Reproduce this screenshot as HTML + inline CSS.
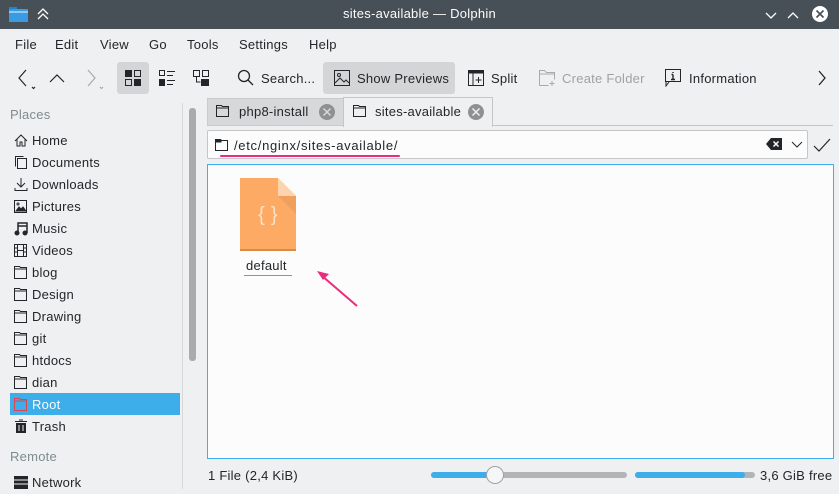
<!DOCTYPE html><html><head><meta charset="utf-8"><style>
*{box-sizing:border-box;margin:0;padding:0}
body{width:839px;height:494px;background:#eff0f1;font-family:"Liberation Sans","DejaVu Sans",sans-serif;font-size:13px;color:#232629;position:relative;overflow:hidden;letter-spacing:0.25px}
.a{position:absolute;white-space:nowrap}
.tb{left:0;top:0;width:839px;height:29px;background:#475057}
.side div.it{position:absolute;left:32px;font-size:13px}
</style></head><body>
<div class="a tb"></div>
<svg class="a" style="left:9px;top:6px" width="19" height="16"><rect x="0" y="1" width="8" height="4" fill="#1d84d1"/><rect x="0" y="3" width="19" height="13" fill="#3a9be3"/><rect x="0" y="5" width="19" height="2" fill="#8fcaf5"/></svg>
<svg class="a" style="left:36px;top:7px" width="14" height="14" stroke="#fff" fill="none" stroke-width="1.3"><path d="M2 7l5-5 5 5M2 12l5-5 5 5"/></svg>
<div class="a" style="left:0;width:839px;top:6px;text-align:center;color:#fcfcfc;font-size:13px">sites-available — Dolphin</div>
<svg class="a" style="left:762px;top:6px" width="75" height="18" stroke="#fff" fill="none" stroke-width="1.3"><path d="M4 7l5 5 5-5M26 12l5-5 5 5"/><circle cx="58" cy="8" r="8" fill="#fff" stroke="none"/><path d="M54.5 4.5l7 7M61.5 4.5l-7 7" stroke="#475057" stroke-width="1.6"/></svg>
<div class="a" style="top:37px;left:15px">File</div>
<div class="a" style="top:37px;left:55px">Edit</div>
<div class="a" style="top:37px;left:100px">View</div>
<div class="a" style="top:37px;left:149px">Go</div>
<div class="a" style="top:37px;left:187px">Tools</div>
<div class="a" style="top:37px;left:239px">Settings</div>
<div class="a" style="top:37px;left:309px">Help</div>
<svg class="a" style="left:14px;top:66px" width="100" height="26" stroke="#232629" fill="none" stroke-width="1.2"><path d="M12 4l-7 8 7 8M18 21l1.5 1.5 1.5-1.5M36 16l7-7 7 7" /><path d="M74 4l7 8-7 8M86 21l1.5 1.5 1.5-1.5" stroke="#aaa"/></svg>
<div class="a" style="left:117px;top:62px;width:32px;height:32px;background:#d4d5d7;border-radius:3px"></div>
<svg class="a" style="left:125px;top:70px" width="16" height="16"><rect x="0" y="0" width="7" height="7" fill="#232629"/><rect x="9.5" y="0.5" width="6" height="6" fill="none" stroke="#232629"/><rect x="0.5" y="9.5" width="6" height="6" fill="none" stroke="#232629"/><rect x="9" y="9" width="7" height="7" fill="#232629"/></svg>
<svg class="a" style="left:159px;top:70px" width="16" height="16" stroke="#232629" fill="none"><rect x="0.5" y="0.5" width="5" height="5"/><rect x="0" y="9" width="6" height="7" fill="#232629" stroke="none"/><path d="M8 1.5h8M8 5.5h6M8 10.5h8M8 14.5h6"/></svg>
<svg class="a" style="left:193px;top:70px" width="16" height="16" stroke="#232629" fill="none"><rect x="0.5" y="0.5" width="6" height="6"/><rect x="9.5" y="0.5" width="6" height="6"/><rect x="8" y="9" width="8" height="7" fill="#232629" stroke="none"/><path d="M3.5 7v5h4"/></svg>
<svg class="a" style="left:237px;top:69px" width="17" height="17" stroke="#232629" fill="none" stroke-width="1.3"><circle cx="7" cy="7" r="5.5"/><path d="M11 11l5 5"/></svg>
<div class="a" style="left:261px;top:71px">Search...</div>
<div class="a" style="left:323px;top:62px;width:132px;height:32px;background:#d4d5d7;border-radius:3px"></div>
<svg class="a" style="left:334px;top:70px" width="16" height="16" stroke="#232629" fill="none"><rect x="0.5" y="0.5" width="15" height="15"/><path d="M1 13l5-5 4 4 2-2 3 3"/><circle cx="5" cy="5" r="1.5"/></svg>
<div class="a" style="left:357px;top:71px">Show Previews</div>
<svg class="a" style="left:468px;top:70px" width="16" height="16" stroke="#232629" fill="none"><rect x="0.5" y="0.5" width="15" height="15"/><path d="M0 2h16" stroke-width="3"/><path d="M5 3v13M10.5 7v6M7.5 10h6"/></svg>
<div class="a" style="left:491px;top:71px">Split</div>
<svg class="a" style="left:539px;top:70px" width="17" height="16" stroke="#a8aaac" fill="none"><path d="M0.5 15.5v-15h5l2 2h8v7"/><path d="M1 4h14" /><path d="M0.5 15.5h9M13 11v5M10.5 13.5h5"/></svg>
<div class="a" style="left:562px;top:71px;color:#a0a2a4">Create Folder</div>
<svg class="a" style="left:665px;top:69px" width="17" height="18" stroke="#232629" fill="none"><rect x="0.5" y="0.5" width="15" height="12"/><path d="M1 13v4l3-4"/><path d="M8 3v1M8 5.5v5M6 10.5h4M6.5 5.5h1.5" stroke-width="1.4"/></svg>
<div class="a" style="left:689px;top:71px">Information</div>
<svg class="a" style="left:817px;top:70px" width="10" height="16" stroke="#232629" fill="none" stroke-width="1.3"><path d="M2 1l6 7-6 7"/></svg>
<div class="a" style="left:10px;top:107px;color:#7f8c8d">Places</div>
<div class="a" style="left:182px;top:103px;width:1px;height:386px;background:#d6d8da"></div>
<div class="a" style="left:189px;top:108px;width:7px;height:253px;background:#a9abad;border-radius:3px"></div>
<div class="a" style="left:10px;top:393px;width:170px;height:22px;background:#3daee9"></div>
<div class="side">
<div class="a it" style="top:133px">Home</div>
<div class="a it" style="top:155px">Documents</div>
<div class="a it" style="top:177px">Downloads</div>
<div class="a it" style="top:199px">Pictures</div>
<div class="a it" style="top:221px">Music</div>
<div class="a it" style="top:243px">Videos</div>
<div class="a it" style="top:265px">blog</div>
<div class="a it" style="top:287px">Design</div>
<div class="a it" style="top:309px">Drawing</div>
<div class="a it" style="top:331px">git</div>
<div class="a it" style="top:353px">htdocs</div>
<div class="a it" style="top:375px">dian</div>
<div class="a it" style="top:397px;color:#fcfcfc">Root</div>
<div class="a it" style="top:419px">Trash</div>
<div class="a it" style="top:475px">Network</div>
</div>
<div class="a" style="left:10px;top:449px;color:#7f8c8d">Remote</div>
<svg class="a" style="left:14px;top:133px" width="14" height="360" stroke="#232629" fill="none">
<path d="M1 8l6-6 6 6M3 6v7h3v-4h2v4h3V6"/>
<g transform="translate(0,22)"><rect x="3.5" y="3.5" width="9" height="10"/><path d="M1.5 11.5v-10h8"/></g>
<g transform="translate(0,44)"><path d="M7 1v9M3 6l4 4 4-4M1 11v2.5h12V11"/></g>
<g transform="translate(0,66)"><rect x="0.5" y="1.5" width="12" height="12"/><path d="M2 12l3-4 2 2 2-2 3 4z" fill="#232629"/><circle cx="4" cy="5" r="1"/></g>
<g transform="translate(0,88)"><path d="M4 12V2h9v10M4 5h9" stroke-width="1.5"/><circle cx="3" cy="12" r="2" fill="#232629"/><circle cx="11" cy="12" r="2" fill="#232629"/></g>
<g transform="translate(0,110)"><rect x="0.5" y="1.5" width="12" height="12"/><path d="M3.5 1v13M9.5 1v13M0 5h3M0 9h3M10 5h3M10 9h3M4 7.5h5"/></g>
<g transform="translate(0,132)"><path d="M0.5 13.5v-12h5l1 1h6v11z M1 4h12"/></g>
<g transform="translate(0,154)"><path d="M0.5 13.5v-12h5l1 1h6v11z M1 4h12"/></g>
<g transform="translate(0,176)"><path d="M0.5 13.5v-12h5l1 1h6v11z M1 4h12"/></g>
<g transform="translate(0,198)"><path d="M0.5 13.5v-12h5l1 1h6v11z M1 4h12"/></g>
<g transform="translate(0,220)"><path d="M0.5 13.5v-12h5l1 1h6v11z M1 4h12"/></g>
<g transform="translate(0,242)"><path d="M0.5 13.5v-12h5l1 1h6v11z M1 4h12"/></g>
<g transform="translate(0,264)"><path d="M0.5 13.5v-12h5l1 1h6v11z M1 4h12" stroke="#da4453"/></g>
<g transform="translate(0,286)"><path d="M1 2.5h12M5 1h4" /><rect x="2" y="4" width="10" height="10" fill="#232629" stroke="none"/><path d="M5 6v6M9 6v6" stroke="#eff0f1"/></g>
<g transform="translate(0,342)"><rect x="0" y="1" width="14" height="13" fill="#232629" stroke="none"/><path d="M0 5h14M0 9h14" stroke="#eff0f1"/></g>
</svg>
<div class="a" style="left:207px;top:98px;width:137px;height:28px;background:#d6d8da;border:1px solid #c8cacc"></div>
<div class="a" style="left:343px;top:97px;width:150px;height:30px;background:#eff0f1;border:1px solid #c4c6c8;border-bottom:none"></div>
<div class="a" style="left:492px;top:125px;width:341px;height:1px;background:#c4c6c8"></div>
<svg class="a" style="left:216px;top:104px" width="14" height="14" stroke="#232629" fill="none"><path d="M0.5 12.5v-11h5l1 1h6v10z M1 4h12"/></svg>
<div class="a" style="left:239px;top:104px">php8-install</div>
<svg class="a" style="left:318px;top:103px" width="18" height="18"><circle cx="9" cy="9" r="8" fill="#8e9092"/><path d="M5.5 5.5l7 7M12.5 5.5l-7 7" stroke="#d6d8da" stroke-width="1.5"/></svg>
<svg class="a" style="left:353px;top:104px" width="14" height="14" stroke="#232629" fill="none"><path d="M0.5 12.5v-11h5l1 1h6v10z M1 4h12"/></svg>
<div class="a" style="left:375px;top:104px">sites-available</div>
<svg class="a" style="left:467px;top:103px" width="18" height="18"><circle cx="9" cy="9" r="8" fill="#8e9092"/><path d="M5.5 5.5l7 7M12.5 5.5l-7 7" stroke="#eff0f1" stroke-width="1.5"/></svg>
<div class="a" style="left:207px;top:130px;width:601px;height:29px;background:#fcfcfc;border:1px solid #c4c6c8;border-radius:2px"></div>
<svg class="a" style="left:215px;top:138px" width="14" height="14" stroke="#232629" fill="none"><path d="M0.5 12.5v-11h5l1 1h6v10z"/><path d="M1 2h5v2H1z" fill="#232629"/></svg>
<div class="a" style="left:234px;top:138px;letter-spacing:0.7px">/etc/nginx/sites-available/</div>
<div class="a" style="left:220px;top:155px;width:180px;height:2px;background:#ea2c7e;border-radius:1px"></div>
<svg class="a" style="left:766px;top:138px" width="16" height="12"><path d="M0 6l5-6h11v12H5z" fill="#232629"/><path d="M7.5 3.5l5 5M12.5 3.5l-5 5" stroke="#fcfcfc" stroke-width="1.5"/></svg>
<svg class="a" style="left:791px;top:141px" width="12" height="8" stroke="#232629" fill="none"><path d="M1 1l5 5 5-5"/></svg>
<svg class="a" style="left:813px;top:138px" width="18" height="14" stroke="#232629" fill="none" stroke-width="1.2"><path d="M1 8l5 5 11-12"/></svg>
<div class="a" style="left:207px;top:164px;width:627px;height:295px;background:#fcfcfc;border:1px solid #3daee9"></div>
<svg class="a" style="left:240px;top:178px" width="57" height="73"><path d="M0 0h38l18 18v55H0z" fill="#fdaa64"/><path d="M38 0l18 18H38z" fill="#fdd4ae"/><path d="M38 18h18v18z" fill="#e89a5a" opacity="0.6"/><rect x="0" y="71" width="56" height="2" fill="#d88a48"/><text x="28" y="43" text-anchor="middle" font-family="Liberation Sans" font-size="20" fill="#fde2c6">{ }</text></svg>
<div class="a" style="left:246px;top:258px">default</div>
<div class="a" style="left:244px;top:275px;width:48px;height:1px;background:#3daee9"></div>
<svg class="a" style="left:312px;top:266px" width="50" height="44"><path d="M45 40L9 9" stroke="#ea2c7e" stroke-width="2"/><path d="M5 5l12 3-6 6z" fill="#ea2c7e"/></svg>
<div class="a" style="left:208px;top:468px">1 File (2,4 KiB)</div>
<div class="a" style="left:431px;top:472px;width:196px;height:6px;background:#b2b4b6;border-radius:3px"></div>
<div class="a" style="left:431px;top:472px;width:64px;height:6px;background:#3daee9;border-radius:3px"></div>
<div class="a" style="left:486px;top:466px;width:18px;height:18px;background:#f5f6f7;border:1px solid #a0a2a4;border-radius:50%"></div>
<div class="a" style="left:635px;top:472px;width:120px;height:6px;background:#b2b4b6;border-radius:3px"></div>
<div class="a" style="left:635px;top:472px;width:110px;height:6px;background:#3daee9;border-radius:3px"></div>
<div class="a" style="left:760px;top:468px">3,6 GiB free</div>
</body></html>
